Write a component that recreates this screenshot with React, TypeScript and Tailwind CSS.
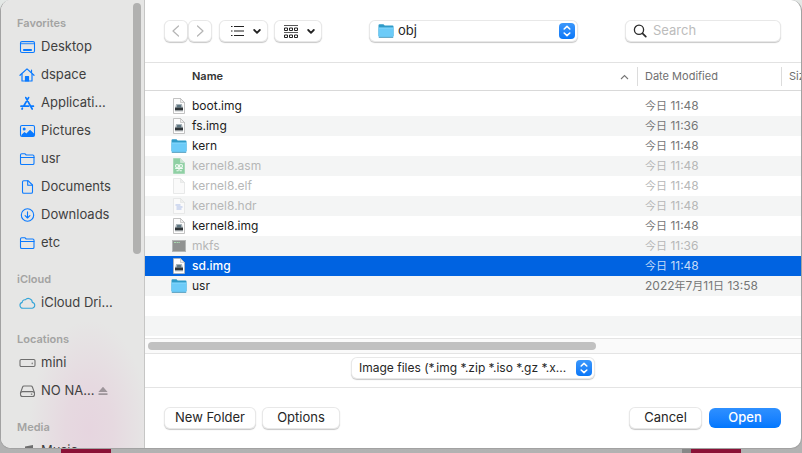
import type { ReactNode } from "react";

type IconName =
  | "desktop" | "home" | "apps" | "pictures" | "folder" | "document"
  | "downloads" | "cloud" | "mini" | "drive" | "music";

const stroke = { fill: "none", stroke: "currentColor", strokeWidth: 1.1, strokeLinecap: "round", strokeLinejoin: "round" } as const;

const sidebarIcons: Record<IconName, ReactNode> = {
  desktop: (
    <g {...stroke}>
      <rect x="1.5" y="2.5" width="14" height="11" rx="1.5" />
      <path d="M2 4.5h13" strokeWidth="1.3" strokeOpacity=".7" />
      <path d="M4.2 11h8.6" strokeWidth="2" strokeLinecap="butt" />
    </g>
  ),
  home: (
    <g {...stroke} strokeWidth="1.2">
      <path d="M1 8.3 8 1.9l7 6.4" />
      <path d="M3 7v7h10V7M12.5 5.5V3" />
      <path d="M6.5 14V9.5h3V14z" fill="currentColor" />
    </g>
  ),
  apps: (
    <g {...stroke} strokeWidth="1.7">
      <path d="M6.8 2.6 13.2 14M9.6 2.6 4.6 11.2M2 11.2h7.5M12 11.2h2.4M3.4 13.2 3 14" />
    </g>
  ),
  pictures: (
    <g>
      <rect x="1.5" y="2.5" width="14" height="11" rx="1.5" {...stroke} />
      <path d="M2 12.2 5.4 9l2 1.6L11 6.8l4.3 4V12a1.3 1.3 0 0 1-1.3 1.3H3.2z" fill="currentColor" />
      <circle cx="5.2" cy="6" r="1.5" fill="currentColor" />
    </g>
  ),
  folder: (
    <g {...stroke}>
      <path d="M1.5 12.2V4q0-1.3 1.3-1.3h3L7.2 4h6.5Q15 4 15 5.3v6.9q0 1.3-1.3 1.3H2.8q-1.3 0-1.3-1.3z" />
      <path d="M1.5 6.5H15" />
    </g>
  ),
  document: (
    <g {...stroke}>
      <path d="M3.5 3q0-1.3 1.3-1.3H9L13.5 6v7q0 1.3-1.3 1.3H4.8q-1.3 0-1.3-1.3z" />
      <path d="M8.7 1.8v4.5h4.6" />
    </g>
  ),
  downloads: (
    <g {...stroke}>
      <circle cx="8.5" cy="8" r="6.2" />
      <path d="M8.5 4.8v6M6.1 8.6l2.4 2.4 2.4-2.4" />
    </g>
  ),
  cloud: (
    <path {...stroke} d="M4 13.3a3 3 0 0 1-.8-5.9 2.6 2.6 0 0 1 3.1-2.6 4 4 0 0 1 7 2.6 3 3 0 0 1 0 5.9z" />
  ),
  mini: (
    <g {...stroke}>
      <rect x="1" y="4.5" width="15" height="7" rx="1.2" />
      <path d="M13.2 8v.8" />
    </g>
  ),
  drive: (
    <g {...stroke}>
      <path d="M1.6 9.6 3.6 4q.4-1 1.4-1h7q1 0 1.4 1l2 5.6" />
      <rect x="1.5" y="8.6" width="14" height="4.9" rx="2" />
      <path d="M12.3 11.1h.6" />
    </g>
  ),
  music: (
    <g fill="currentColor">
      <path d="M6 3.6 14 2v9.5h-1.4V5.4L7.4 6.5v6H6z" />
      <ellipse cx="5.2" cy="12.6" rx="2.2" ry="1.7" />
      <ellipse cx="11.8" cy="11.6" rx="2.2" ry="1.7" />
    </g>
  ),
};

const groups: { title: string; tint: string; items: { label: string; icon: IconName; eject?: boolean }[] }[] = [
  {
    title: "Favorites",
    tint: "text-[#0a7aff]",
    items: [
      { label: "Desktop", icon: "desktop" },
      { label: "dspace", icon: "home" },
      { label: "Applicati...", icon: "apps" },
      { label: "Pictures", icon: "pictures" },
      { label: "usr", icon: "folder" },
      { label: "Documents", icon: "document" },
      { label: "Downloads", icon: "downloads" },
      { label: "etc", icon: "folder" },
    ],
  },
  { title: "iCloud", tint: "text-[#35a5d8]", items: [{ label: "iCloud Dri...", icon: "cloud" }] },
  {
    title: "Locations",
    tint: "text-[#6e6e6e]",
    items: [
      { label: "mini", icon: "mini" },
      { label: "NO NA...", icon: "drive", eject: true },
    ],
  },
  { title: "Media", tint: "text-[#6e6e6e]", items: [{ label: "Music", icon: "music" }] },
];

type Kind = "image" | "folder" | "asm" | "blank" | "text" | "exec";

const files: { name: string; kind: Kind; date: string; dim?: boolean; selected?: boolean }[] = [
  { name: "boot.img", kind: "image", date: "今日 11:48" },
  { name: "fs.img", kind: "image", date: "今日 11:36" },
  { name: "kern", kind: "folder", date: "今日 11:48" },
  { name: "kernel8.asm", kind: "asm", date: "今日 11:48", dim: true },
  { name: "kernel8.elf", kind: "blank", date: "今日 11:48", dim: true },
  { name: "kernel8.hdr", kind: "text", date: "今日 11:48", dim: true },
  { name: "kernel8.img", kind: "image", date: "今日 11:48" },
  { name: "mkfs", kind: "exec", date: "今日 11:36", dim: true },
  { name: "sd.img", kind: "image", date: "今日 11:48", selected: true },
  { name: "usr", kind: "folder", date: "2022年7月11日 13:58" },
];

function FolderIcon() {
  return (
    <svg className="block size-4 shrink-0" viewBox="0 0 16 16" aria-hidden="true">
      <path d="M.5 2.3q0-1 1-1h4l1.2 1.2h7.8q1 0 1 1V13H.5z" fill="#2f9bc8" />
      <path d="M.5 4.8h15v8.7q0 1-1 1h-13q-1 0-1-1z" fill="#6ccbf8" />
      <path d="M.5 5h15" stroke="#8fdcff" strokeWidth=".8" />
      <path d="M.8 14.4h14.4" stroke="#4b93b4" strokeWidth=".8" />
    </svg>
  );
}

function FileIcon({ kind }: { kind: Kind }) {
  if (kind === "folder") return <FolderIcon />;
  if (kind === "exec") {
    return (
      <svg className="size-4 shrink-0" viewBox="0 0 16 16" aria-hidden="true">
        <rect x="1.5" y="2.5" width="13" height="11" fill="#909291" stroke="#b5b7b6" />
        <path d="M3 4.5h6" stroke="#a9d8b0" strokeWidth="1" strokeDasharray="2 .6" />
      </svg>
    );
  }
  const asm = kind === "asm";
  const image = kind === "image";
  return (
    <svg className="size-4 shrink-0" viewBox="0 0 16 16" aria-hidden="true">
      <path
        d="M2.5.5h7l4 4v11h-11z"
        fill={asm ? "#8fd0a4" : image ? "#fdfdfd" : "#fafafa"}
        stroke={asm ? "#9fd6b1" : image ? "#b4b4b4" : "#e2e3e3"}
        strokeWidth=".8"
      />
      <path d="M9.5.5v4h4z" fill={asm ? "#c5e8d0" : "#eeeeee"} stroke={image ? "#b4b4b4" : "#dfe3e0"} strokeWidth=".6" />
      {image && (
        <g>
          <path d="M5.2 6h5.6l1.2 4H4z" fill="#a9b3b9" />
          <path d="M6.2 7h3.6l.4 2.6H5.8z" fill="#5d7580" />
          <rect x="4" y="9.6" width="8" height="2.4" fill="#2f3538" />
          <rect x="4" y="12" width="8" height="1.3" fill="#9a9fa2" />
        </g>
      )}
      {asm && (
        <g fill="none" stroke="#f2fbf5" strokeWidth="1.1">
          <circle cx="6" cy="8" r="1.5" />
          <circle cx="10" cy="8" r="1.5" />
          <path d="M4.2 10.5h7.6M5.5 12.8h2M8.8 12.8h2M8 6.5v6" />
        </g>
      )}
      {kind === "text" && <path d="M4.5 7h5M5.5 9h6M5.5 11h5" stroke="#a9bbe6" strokeWidth="1" />}
    </svg>
  );
}

function Stepper() {
  return (
    <span className="pointer-events-none absolute right-[3px] top-[3px] grid size-4 place-items-center rounded bg-linear-to-b from-[#3a97fb] to-[#0677f8]">
      <svg className="size-4" viewBox="0 0 16 16" fill="none" stroke="white" strokeWidth="1.6" strokeLinecap="round" strokeLinejoin="round" aria-hidden="true">
        <path d="M5.2 6 8 3.4 10.8 6M5.2 10 8 12.6l2.8-2.6" />
      </svg>
    </span>
  );
}

function Chevron() {
  return (
    <svg className="h-[22px] w-2" viewBox="0 0 8 22" fill="none" stroke="#222" strokeWidth="1.8" strokeLinecap="round" strokeLinejoin="round" aria-hidden="true">
      <path d="m1.2 10 2.8 2.8L6.8 10" />
    </svg>
  );
}

const control =
  "h-[22px] rounded-md bg-white shadow-[0_0_0_1px_rgba(0,0,0,0.09)_inset,0_1px_1px_rgba(0,0,0,0.22)]";

function DateText({ value }: { value: string }) {
  return (
    <>
      {value.split(/([今日年月]+)/).map((part, i) =>
        /[今日年月]/.test(part) ? <span key={i} className="text-[11px]">{part}</span> : part,
      )}
    </>
  );
}

function Sidebar() {
  return (
    <aside className="flex w-36 shrink-0 overflow-hidden border-r border-[#c6c6c5] bg-[#e6e6e5] bg-[radial-gradient(ellipse_60px_110px_at_88px_430px,#e6d5df_0%,#e6d9e0_40%,transparent_100%)]">
      <nav aria-label="Places" className="min-w-0 flex-1 pl-4">
        {groups.map((group) => (
          <section key={group.title} className="pt-[14px]">
            <h2 className="h-[18px] text-[11px] font-semibold leading-[18px] text-[#a3a3a2]">{group.title}</h2>
            <ul>
              {group.items.map((item) => (
                <li key={item.label} className="flex h-7 items-center pt-px">
                  <a href="#" className="flex items-center gap-[5px] whitespace-nowrap pl-0.5 text-[13px] text-[#3f3f3f]">
                    <svg className={`h-4 w-[17px] shrink-0 ${group.tint}`} viewBox="0 0 17 16" aria-hidden="true">
                      {sidebarIcons[item.icon]}
                    </svg>
                    {item.label}
                  </a>
                  {item.eject && (
                    <button type="button" aria-label="Eject" className="ml-1 text-[#9d959a]">
                      <svg className="h-2.5 w-[10px]" viewBox="0 0 10 10" fill="currentColor" aria-hidden="true">
                        <path d="M5 .8 9.6 6H.4zM.5 7.2h9v1.7h-9z" />
                      </svg>
                    </button>
                  )}
                </li>
              ))}
            </ul>
          </section>
        ))}
      </nav>
      <div className="mr-[3px] mt-[3px] h-[251px] w-2 shrink-0 rounded-full bg-[#b1b1b0]" />
    </aside>
  );
}

function Toolbar() {
  return (
    <header className="flex h-[63px] shrink-0 items-center border-b border-[#e2e2e2] pl-[19px] pr-5">
      <button type="button" aria-label="Back" className={`${control} grid w-6 place-items-center`}>
        <svg className="size-4" viewBox="0 0 16 16" fill="none" stroke="#b5b5b5" strokeWidth="1.2" strokeLinecap="round" strokeLinejoin="round" aria-hidden="true">
          <path d="M10.5 3 5 8l5.5 5" />
        </svg>
      </button>
      <button type="button" aria-label="Forward" className={`${control} grid w-6 place-items-center`}>
        <svg className="size-4" viewBox="0 0 16 16" fill="none" stroke="#b5b5b5" strokeWidth="1.2" strokeLinecap="round" strokeLinejoin="round" aria-hidden="true">
          <path d="m5.5 3 5.5 5-5.5 5" />
        </svg>
      </button>
      <button type="button" aria-label="List view" className={`${control} ml-[7px] flex w-[49px] items-center justify-between pl-3 pr-[7px]`}>
        <svg className="h-3 w-[13px]" viewBox="0 0 13 12" stroke="#222" strokeWidth="1.1" aria-hidden="true">
          <path d="M0 1.5h1.5M0 6h1.5M0 10.5h1.5M3 1.5h10M3 6h10M3 10.5h10" />
        </svg>
        <Chevron />
      </button>
      <button type="button" aria-label="Group by" className={`${control} ml-1.5 flex w-12 items-center justify-between pl-2.5 pr-[7px]`}>
        <svg className="h-[15px] w-[14px]" viewBox="0 0 14 15" fill="none" stroke="#222" strokeWidth="1" aria-hidden="true">
          <path d="M0 1.5h14M0 8.5h14" strokeOpacity=".75" />
          <path d="M.5 4h3v2.5h-3zM5.5 4h3v2.5h-3zM10.5 4h3v2.5h-3zM.5 11h3v2.5h-3zM5.5 11h3v2.5h-3zM10.5 11h3v2.5h-3z" />
        </svg>
        <Chevron />
      </button>
      <div className="flex min-w-0 flex-1 justify-center">
        <div className="relative w-[209px]">
          <select aria-label="Current folder" className={`${control} block w-full appearance-none pl-[29px] text-[13px] text-[#262626]`}>
            <option>obj</option>
          </select>
          <span className="pointer-events-none absolute left-[9px] top-[3px]">
            <FolderIcon />
          </span>
          <Stepper />
        </div>
      </div>
      <label className={`${control} flex w-[156px] items-center gap-1.5 pl-2`}>
        <svg className="size-[14px] shrink-0" viewBox="0 0 14 14" fill="none" stroke="#2b2b2b" strokeWidth="1.3" strokeLinecap="round" aria-hidden="true">
          <circle cx="6" cy="5.8" r="4.6" />
          <path d="m9.5 9.3 3.3 3.3" strokeWidth="1.7" />
        </svg>
        <input type="search" aria-label="Search" placeholder="Search" className="w-full min-w-0 bg-transparent text-[13px] outline-none placeholder:text-[#bcbcbc]" />
      </label>
    </header>
  );
}

function FileTable() {
  return (
    <div className="min-h-0 flex-1 overflow-hidden">
      <table className="w-full table-fixed border-separate border-spacing-0">
        <colgroup>
          <col />
          <col className="w-36" />
          <col className="w-5" />
        </colgroup>
        <thead className="text-left text-[11px] text-[#6f6f6f]">
          <tr>
            <th scope="col" aria-sort="ascending" className="h-7 border-b border-[#d9d9d9] p-0">
              <div className="flex items-center justify-between pl-[47px] pr-2">
                <span className="font-semibold text-[#333]">Name</span>
                <svg className="h-2 w-[9px]" viewBox="0 0 9 8" fill="none" stroke="#777" strokeWidth="1.1" aria-hidden="true">
                  <path d="M1 6 4.5 2.5 8 6" />
                </svg>
              </div>
            </th>
            <th scope="col" className="border-b border-[#d9d9d9] p-0 font-normal">
              <div className="h-[19px] border-l border-[#dcdcdc] pl-[7px] leading-[19px]">Date Modified</div>
            </th>
            <th scope="col" className="border-b border-[#d9d9d9] p-0 font-normal">
              <div className="h-[19px] overflow-hidden border-l border-[#dcdcdc] pl-[7px] leading-[19px]">Size</div>
            </th>
          </tr>
        </thead>
        <tbody className="leading-5 before:block before:h-[5px]">
          {files.map((file) => (
            <tr key={file.name} aria-selected={file.selected} className={file.selected ? "bg-[#0063e1]" : "even:bg-[#f4f5f5]"}>
              <td className="h-5 p-0 text-xs leading-5">
                <div className={`flex h-5 items-center gap-[5px] pl-[26px] ${file.selected ? "font-medium text-white" : file.dim ? "text-[#b6b7b7]" : "text-[#1c1c1c]"}`}>
                  <FileIcon kind={file.kind} />
                  {file.name}
                </div>
              </td>
              <td className={`whitespace-nowrap p-0 pl-2 text-xs leading-5 ${file.selected ? "text-[#c6dcf8]" : file.dim ? "text-[#b6b7b7]" : "text-[#757676]"}`}>
                <div className="h-5">
                  <DateText value={file.date} />
                </div>
              </td>
              <td className="p-0" />
            </tr>
          ))}
          <tr aria-hidden="true"><td colSpan={3} className="h-5 p-0" /></tr>
          <tr aria-hidden="true"><td colSpan={3} className="h-5 bg-[#f4f5f5] p-0" /></tr>
        </tbody>
      </table>
    </div>
  );
}

export default function App() {
  return (
    <div className="relative flex h-screen flex-col bg-linear-to-b from-[#e4e8e6] via-[#b4b4b4] to-[#b2b2b2] font-['Inter','Noto_Sans_CJK_SC',sans-serif]">
      <div aria-hidden="true" className="absolute inset-x-0 bottom-0 flex h-5 justify-between px-[61px]">
        <div className="w-[50px] bg-[#8b1237]" />
        <div className="w-[59px] border-l-[9px] border-[#888888] bg-[#8b1237]" />
      </div>
      <main className="relative mb-1 flex min-h-0 flex-1 overflow-hidden rounded-[11px] border border-t-0 border-[#a2a2a2] bg-white">
        <Sidebar />
        <div className="flex min-w-0 flex-1 flex-col">
          <Toolbar />
          <FileTable />
          <div className="h-4 shrink-0 border-y border-[#e4e4e4] bg-[#fafafa] pl-[3px] pt-[3px]">
            <div className="h-2 w-[448px] max-w-full rounded-full bg-[#c1c1c1]" />
          </div>
          <div className="flex h-[34px] shrink-0 justify-center border-b border-[#e4e4e4] pt-[3px]">
            <div className="relative w-[244px]">
              <select aria-label="File type" className={`${control} block w-full appearance-none pl-2 text-xs text-[#262626]`}>
                <option>Image files (*.img *.zip *.iso *.gz *.x...</option>
              </select>
              <Stepper />
            </div>
          </div>
          <footer className="flex h-[60px] shrink-0 items-center pl-[19px] pr-5 text-[13px] text-[#262626]">
            <button type="button" className={`${control} w-[92px]`}>New Folder</button>
            <button type="button" className={`${control} ml-1.5 w-[78px]`}>Options</button>
            <button type="button" className={`${control} ml-auto w-[73px]`}>Cancel</button>
            <button type="button" className="ml-[7px] h-5 w-[72px] rounded-md bg-linear-to-b from-[#2e90ff] to-[#0077fe] font-medium text-white">Open</button>
          </footer>
        </div>
      </main>
    </div>
  );
}
